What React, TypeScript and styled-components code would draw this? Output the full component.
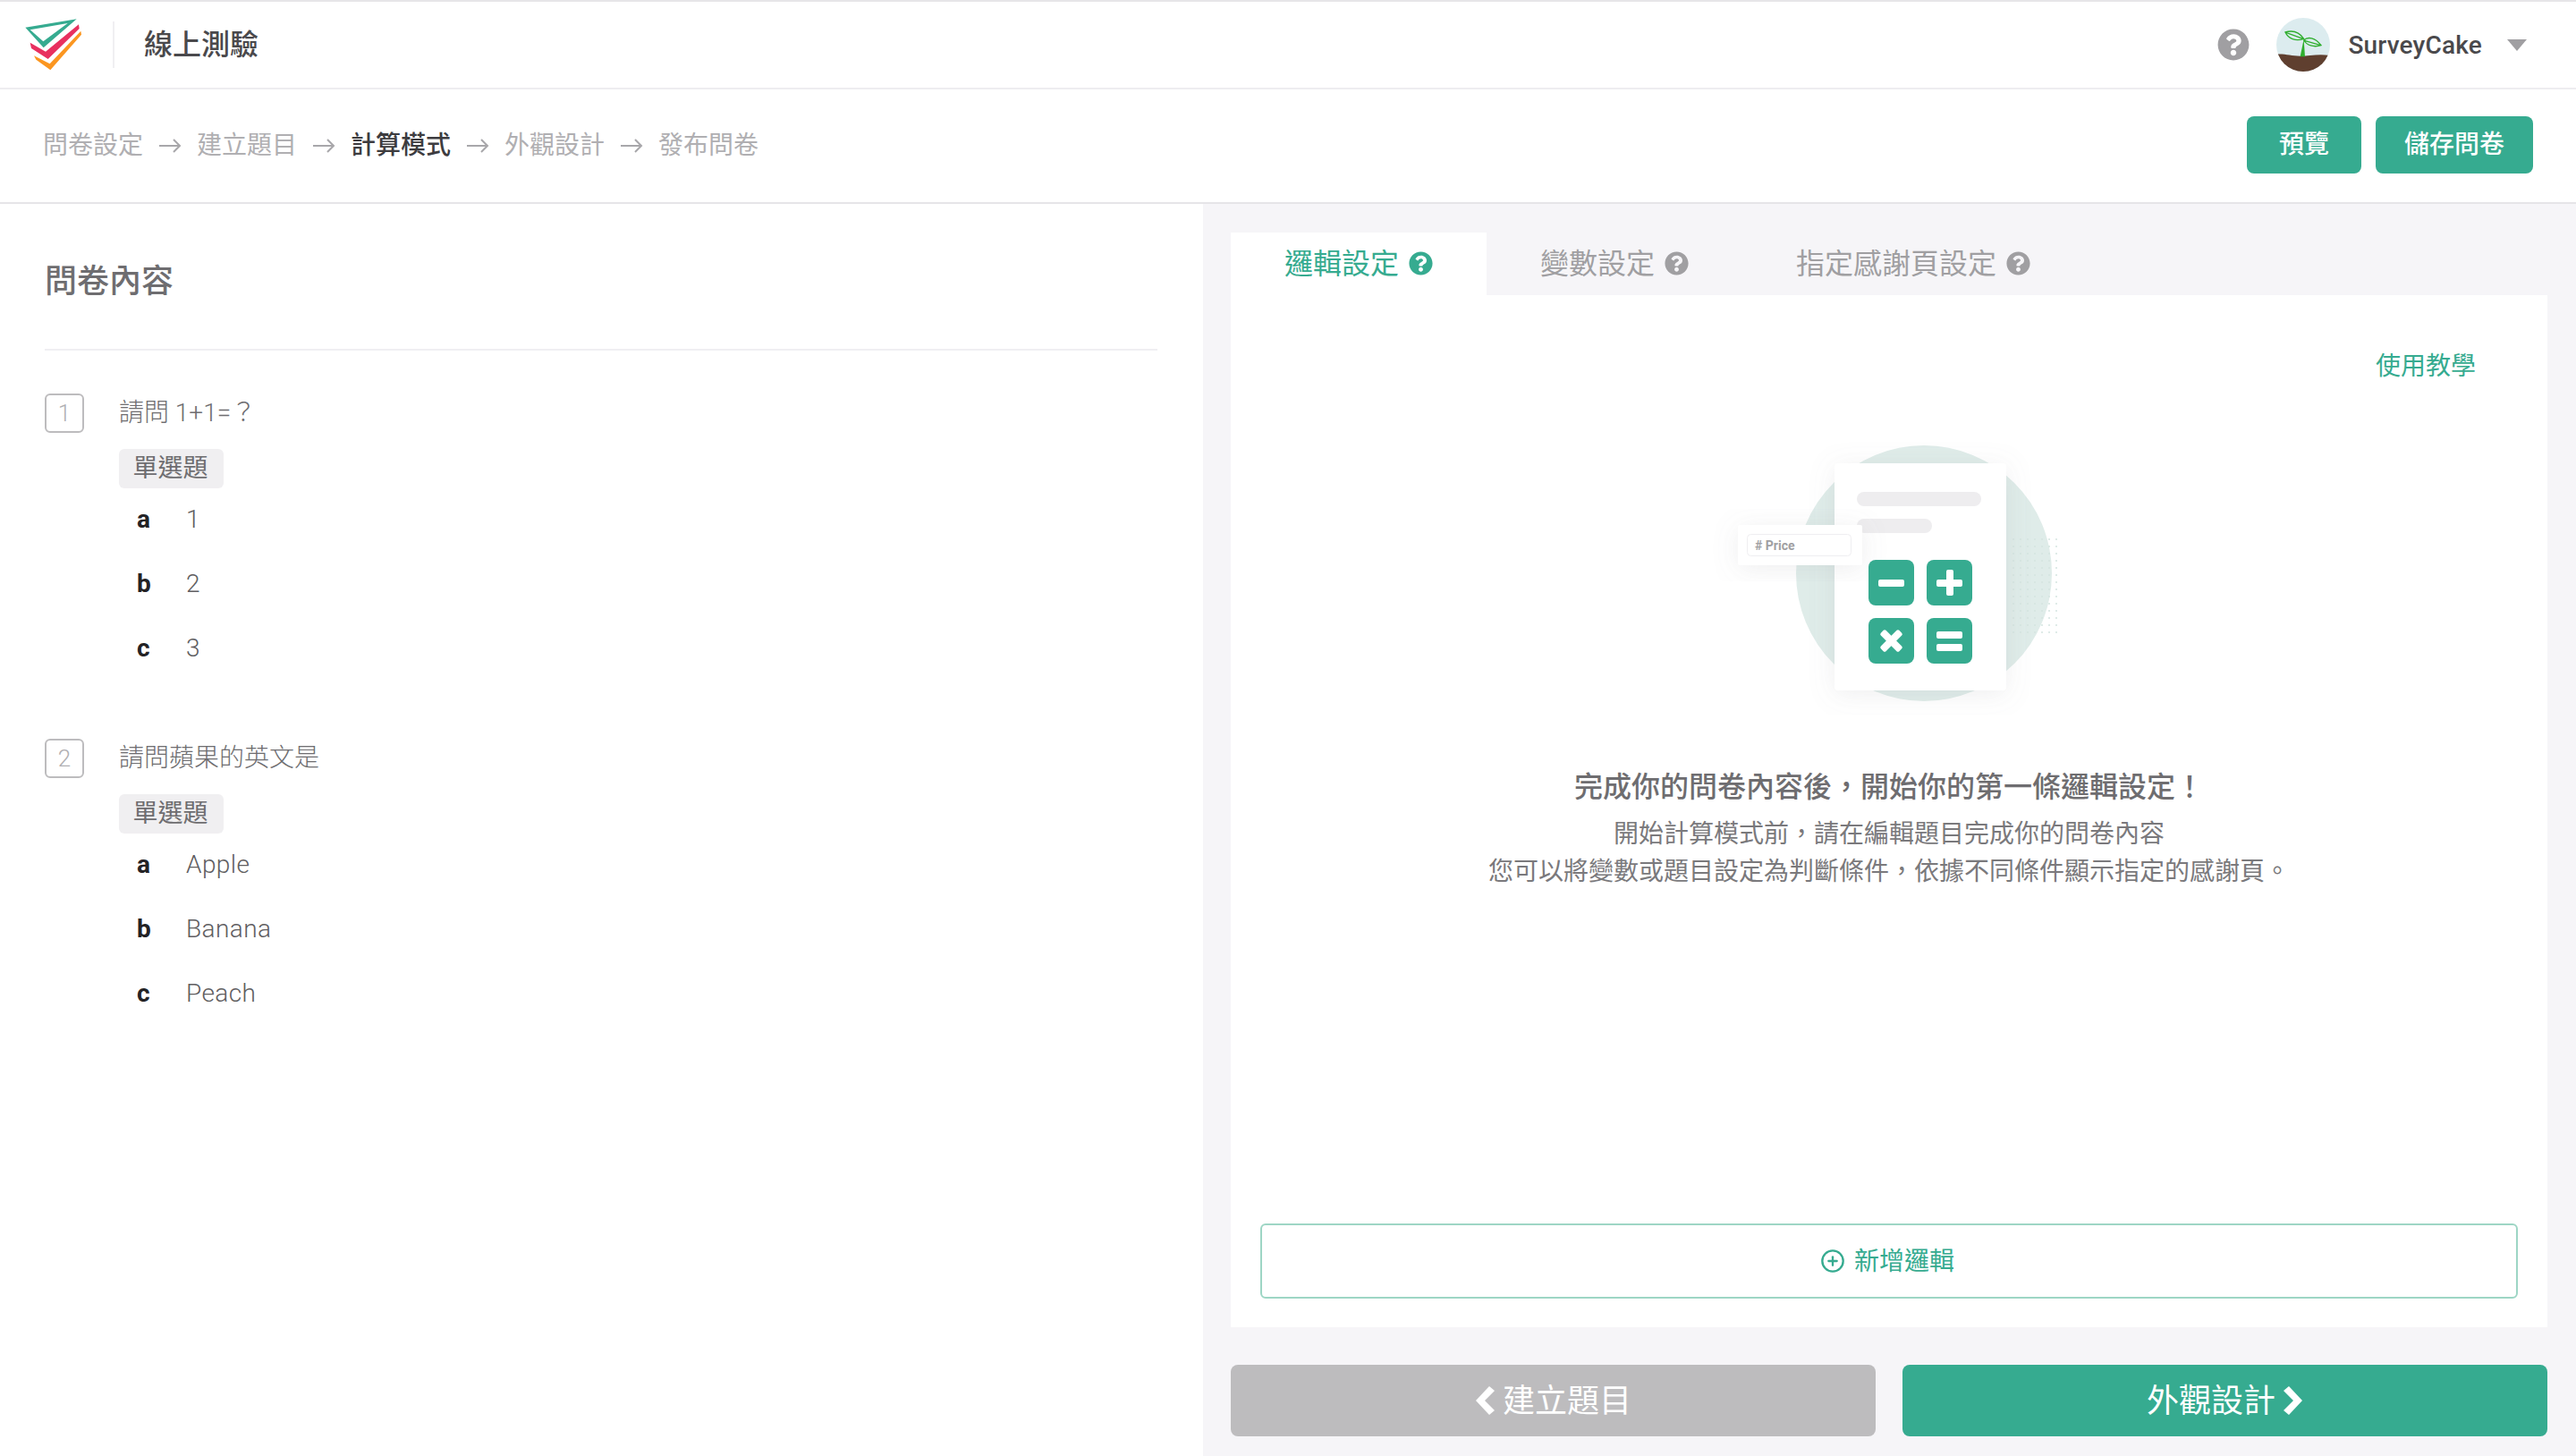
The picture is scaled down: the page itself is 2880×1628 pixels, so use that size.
import React from 'react';
import styled, { createGlobalStyle } from 'styled-components';
import { FaQuestionCircle } from 'react-icons/fa';
import { FiPlusCircle } from 'react-icons/fi';

const GlobalStyle = createGlobalStyle`
	html, body {
		margin: 0;
		padding: 0;
		background: #ffffff;
	}
	* {
		box-sizing: border-box;
	}
	body {
		font-family: Roboto, "Noto Sans CJK TC", sans-serif;
		color: #6e6d70;
	}
`;

const Page = styled.div`
	display: flex;
	flex-direction: column;
	width: 2880px;
	height: 1628px;
	overflow: hidden;
	border-top: 2px solid #e6e5e8;
`;

const Header = styled.header`
	display: flex;
	align-items: center;
	flex: none;
	height: 98px;
	padding: 0 55px 0 27px;
	border-bottom: 2px solid #eeedf0;
`;

const LogoWrap = styled.div`
	display: flex;
	align-items: center;
	height: 52px;
	width: 101px;
	border-right: 2px solid #f0eff2;
`;

const AppTitle = styled.h1`
	flex: 1;
	margin: 0 0 0 33px;
	font-size: 32px;
	font-weight: 500;
	line-height: 44px;
	color: #4a494c;
`;

const HelpButton = styled.span`
	display: flex;
	font-size: 36px;
	color: #a09fa2;
`;

const Avatar = styled.svg`
	width: 60px;
	height: 60px;
	margin-left: 30px;
`;

const UserName = styled.span`
	margin-left: 20px;
	font-size: 28px;
	font-weight: 500;
	letter-spacing: 0.2px;
	color: #4a494c;
`;

const Caret = styled.span`
	width: 0;
	height: 0;
	margin-left: 28px;
	border-left: 11px solid transparent;
	border-right: 11px solid transparent;
	border-top: 13px solid #a09fa2;
`;

const StepBar = styled.div`
	display: flex;
	align-items: center;
	justify-content: space-between;
	flex: none;
	height: 128px;
	padding: 0 48px 2px 48px;
	border-bottom: 2px solid #e6e5e8;
`;

const Steps = styled.nav`
	display: flex;
	align-items: center;
	gap: 17px;
	margin-top: 2px;
`;

const Step = styled.span<{ $active?: boolean }>`
	font-size: 28px;
	line-height: 40px;
	font-weight: ${(p) => (p.$active ? 500 : 400)};
	color: ${(p) => (p.$active ? '#3d3c3f' : '#b0afb2')};
`;

const StepArrow = styled.svg`
	width: 26px;
	height: 18px;
	fill: none;
	stroke: #a8a7aa;
	stroke-width: 2;
`;

const Actions = styled.div`
	display: flex;
	gap: 16px;
`;

const ActionButton = styled.button<{ $width: number }>`
	width: ${(p) => p.$width}px;
	height: 64px;
	padding: 0 0 6px;
	border: 0;
	border-radius: 8px;
	background: #36ab90;
	color: #ffffff;
	font-family: inherit;
	font-size: 28px;
	font-weight: 500;
`;

const Body = styled.div`
	display: flex;
	flex: 1;
	min-height: 0;
`;

const LeftPanel = styled.section`
	flex: none;
	width: 1345px;
	padding: 62px 51px 0 50px;
`;

const PanelTitle = styled.h2`
	margin: 0;
	padding-bottom: 50px;
	font-size: 36px;
	font-weight: 500;
	line-height: 50px;
	color: #6e6d70;
	border-bottom: 2px solid #f0eff2;
`;

const QuestionList = styled.div`
	display: flex;
	flex-direction: column;
	gap: 66px;
	margin-top: 48px;
`;

const QuestionRow = styled.div`
	display: flex;
	align-items: center;
	gap: 39px;
`;

const QuestionNo = styled.span`
	display: flex;
	align-items: center;
	justify-content: center;
	width: 44px;
	height: 44px;
	border: 2px solid #bdbcbe;
	border-radius: 6px;
	font-size: 26px;
	font-weight: 300;
	color: #b0afb2;
`;

const QuestionText = styled.span`
	font-size: 28px;
	font-weight: 300;
	line-height: 44px;
	color: #6e6d70;
`;

const TypeTag = styled.span`
	display: block;
	width: 117px;
	height: 44px;
	margin: 18px 0 -2px 83px;
	padding-right: 2px;
	border-radius: 6px;
	background: #f0eff1;
	font-size: 28px;
	line-height: 44px;
	text-align: center;
	color: #6e6d70;
`;

const Option = styled.div`
	display: flex;
	height: 72px;
	align-items: center;
	padding-left: 103px;
	font-size: 28px;
`;

const OptionKey = styled.b`
	width: 55px;
	font-weight: 700;
	color: #232225;
`;

const OptionValue = styled.span`
	font-weight: 300;
	letter-spacing: 0.4px;
	color: #5f5e61;
`;

const RightPanel = styled.section`
	display: flex;
	flex: 1;
	flex-direction: column;
	min-width: 0;
	padding: 32px 32px 22px 31px;
	background: #f6f5f8;
`;

const Tabs = styled.div`
	display: flex;
	flex: none;
`;

const Tab = styled.div<{ $active?: boolean }>`
	display: flex;
	align-items: center;
	gap: 11px;
	height: 70px;
	padding: 0 60px 6px;
	background: ${(p) => (p.$active ? '#ffffff' : 'transparent')};
	color: ${(p) => (p.$active ? '#36ab90' : '#a09fa2')};
	font-size: 32px;

	svg {
		font-size: 27px;
		margin-top: 4px;
	}
`;

const Card = styled.div`
	display: flex;
	flex: 1;
	flex-direction: column;
	min-height: 0;
	padding: 60px 33px 32px 33px;
	background: #ffffff;
`;

const TutorialLink = styled.a`
	align-self: flex-end;
	margin-right: 47px;
	font-size: 28px;
	line-height: 40px;
	color: #36ab90;
`;

const Illustration = styled.svg`
	display: block;
	align-self: center;
	width: 460px;
	height: 330px;
	margin-top: 40px;
`;

const EmptyTitle = styled.h3`
	margin: 58px 0 0;
	font-size: 32px;
	font-weight: 500;
	line-height: 44px;
	text-align: center;
	color: #6e6d70;
`;

const EmptyText = styled.p`
	margin: 10px 0 0;
	font-size: 28px;
	line-height: 42px;
	text-align: center;
	color: #7a797c;
`;

const AddButton = styled.button`
	display: flex;
	align-items: center;
	justify-content: center;
	gap: 10px;
	flex: none;
	height: 84px;
	margin-top: auto;
	padding: 0 4px 5px 0;
	border: 2px solid #9ed6c5;
	border-radius: 6px;
	background: #ffffff;
	color: #36ab90;
	font-family: inherit;
	font-size: 28px;

	svg {
		font-size: 28px;
		margin-top: 5px;
	}
`;

const PagerRow = styled.div`
	display: grid;
	flex: none;
	grid-template-columns: 1fr 1fr;
	gap: 30px;
	margin-top: 42px;
`;

const PagerButton = styled.button<{ $primary?: boolean }>`
	display: flex;
	align-items: center;
	justify-content: center;
	gap: 9px;
	height: 80px;
	padding: 0 0 6px;
	border: 0;
	border-radius: 8px;
	background: ${(p) => (p.$primary ? '#36ab90' : '#bdbcbe')};
	color: #ffffff;
	font-family: inherit;
	font-size: 36px;
`;

const Chevron = styled.svg`
	width: 22px;
	height: 34px;
	margin-top: 6px;
	fill: #ffffff;
`;

const Logo = () => (
	<svg width="64" height="60" viewBox="20 20 192 180">
		<path
			d="M24 52 L196 24 L85 120 Z M40 60 L166 38 L84 99 Z"
			fill="#36ab90"
			fillRule="evenodd"
		/>
		<path d="M40 103 L92 133 L203 42 L205 56 L100 158 L44 122 Z" fill="#e8305f" />
		<path d="M53 147 L106 174 L210 64 L212 76 L108 195 L60 160 Z" fill="#fb9620" />
	</svg>
);

const Plant = () => (
	<Avatar viewBox="30 30 180 180">
		<defs>
			<clipPath id="avatar-clip">
				<circle cx="120" cy="120" r="90" />
			</clipPath>
		</defs>
		<g clipPath="url(#avatar-clip)">
			<rect x="30" y="30" width="180" height="180" fill="#dcecef" />
			<path d="M30 152 C60 150 80 158 110 158 C140 158 170 150 210 156 L210 210 L30 210 Z" fill="#5f3f2f" />
		</g>
		<path d="M110 160 C114 140 118 120 122 102 L126 160 Z" fill="#2fae2e" />
		<path d="M122 100 C105 75 80 72 60 78 C70 100 95 110 122 100 Z M62 79 L120 100" fill="none" stroke="#2fae2e" strokeWidth="4" />
		<path d="M122 105 C135 92 160 95 180 122 C155 130 132 122 122 105 Z M124 106 L176 121" fill="none" stroke="#2fae2e" strokeWidth="4" />
	</Avatar>
);

const Calculator = () => (
	<Illustration viewBox="1882 470 460 330">
		<defs>
			<pattern id="dots" width="8" height="8" patternUnits="userSpaceOnUse">
				<circle cx="3" cy="3" r="1" fill="#d5e4e1" />
			</pattern>
			<filter id="soft" x="-40%" y="-40%" width="180%" height="180%">
				<feDropShadow dx="0" dy="4" stdDeviation="14" floodColor="#8a8990" floodOpacity="0.14" />
			</filter>
		</defs>
		<circle cx="2151" cy="641" r="143" fill="#dfece9" />
		<rect x="2245" y="598" width="58" height="112" fill="url(#dots)" />
		<rect x="2051" y="518" width="192" height="254" rx="4" fill="#ffffff" filter="url(#soft)" />
		<rect x="2076" y="550" width="139" height="16" rx="8" fill="#eeedef" />
		<rect x="2076" y="580" width="84" height="16" rx="8" fill="#eeedef" />
		<rect x="1943" y="587" width="139" height="45" rx="2" fill="#ffffff" filter="url(#soft)" />
		<rect x="1953.5" y="597.5" width="116" height="24" rx="4" fill="#ffffff" stroke="#efeef1" />
		<text x="1962" y="614.5" fontFamily="Roboto, sans-serif" fontSize="14" fontWeight="700" fill="#a09fa2">
			# Price
		</text>
		<rect x="2089" y="626" width="51" height="51" rx="8" fill="#36ab90" />
		<rect x="2154" y="626" width="51" height="51" rx="8" fill="#36ab90" />
		<rect x="2089" y="691" width="51" height="51" rx="8" fill="#36ab90" />
		<rect x="2154" y="691" width="51" height="51" rx="8" fill="#36ab90" />
		<rect x="2100" y="648" width="29" height="8" rx="2" fill="#ffffff" />
		<rect x="2165" y="648" width="29" height="8" rx="2" fill="#ffffff" />
		<rect x="2176" y="637" width="8" height="29" rx="2" fill="#ffffff" />
		<g transform="rotate(45 2114.5 716.5)">
			<rect x="2100" y="712.5" width="29" height="8" rx="2" fill="#ffffff" />
			<rect x="2110.5" y="702" width="8" height="29" rx="2" fill="#ffffff" />
		</g>
		<rect x="2165" y="706" width="29" height="8" rx="2" fill="#ffffff" />
		<rect x="2165" y="720" width="29" height="8" rx="2" fill="#ffffff" />
	</Illustration>
);

const steps = ['問卷設定', '建立題目', '計算模式', '外觀設計', '發布問卷'];

const questions = [
	{
		no: 1,
		title: '請問 1+1=\uFF1F',
		options: [
			['a', '1'],
			['b', '2'],
			['c', '3'],
		],
	},
	{
		no: 2,
		title: '請問蘋果的英文是',
		options: [
			['a', 'Apple'],
			['b', 'Banana'],
			['c', 'Peach'],
		],
	},
];

const tabs = ['邏輯設定', '變數設定', '指定感謝頁設定'];

export default function App(): JSX.Element {
	return (
		<Page>
			<GlobalStyle />
			<Header>
				<LogoWrap>
					<Logo />
				</LogoWrap>
				<AppTitle>線上測驗</AppTitle>
				<HelpButton>
					<FaQuestionCircle />
				</HelpButton>
				<Plant />
				<UserName>SurveyCake</UserName>
				<Caret />
			</Header>
			<StepBar>
				<Steps>
					{steps.map((s, i) => (
						<React.Fragment key={s}>
							{i > 0 && (
								<StepArrow viewBox="0 0 26 18">
									<path d="M1 9 H24 M17 2 L24 9 L17 16" />
								</StepArrow>
							)}
							<Step $active={i === 2}>{s}</Step>
						</React.Fragment>
					))}
				</Steps>
				<Actions>
					<ActionButton $width={128}>預覽</ActionButton>
					<ActionButton $width={176}>儲存問卷</ActionButton>
				</Actions>
			</StepBar>
			<Body>
				<LeftPanel>
					<PanelTitle>問卷內容</PanelTitle>
					<QuestionList>
						{questions.map((q) => (
							<div key={q.no}>
								<QuestionRow>
									<QuestionNo>{q.no}</QuestionNo>
									<QuestionText>{q.title}</QuestionText>
								</QuestionRow>
								<TypeTag>單選題</TypeTag>
								{q.options.map(([k, v]) => (
									<Option key={k}>
										<OptionKey>{k}</OptionKey>
										<OptionValue>{v}</OptionValue>
									</Option>
								))}
							</div>
						))}
					</QuestionList>
				</LeftPanel>
				<RightPanel>
					<Tabs>
						{tabs.map((t, i) => (
							<Tab key={t} $active={i === 0}>
								{t}
								<FaQuestionCircle />
							</Tab>
						))}
					</Tabs>
					<Card>
						<TutorialLink>使用教學</TutorialLink>
						<Calculator />
						<EmptyTitle>{'完成你的問卷內容後\uFF0C開始你的第一條邏輯設定\uFF01'}</EmptyTitle>
						<EmptyText>
							{'開始計算模式前\uFF0C請在編輯題目完成你的問卷內容'}
							<br />
							{'您可以將變數或題目設定為判斷條件\uFF0C依據不同條件顯示指定的感謝頁。'}
						</EmptyText>
						<AddButton>
							<FiPlusCircle />
							新增邏輯
						</AddButton>
					</Card>
					<PagerRow>
						<PagerButton>
							<Chevron viewBox="0 0 22 34">
								<path d="M16 1 L22 6 L11 17 L22 28 L16 33 L1 17 Z" />
							</Chevron>
							建立題目
						</PagerButton>
						<PagerButton $primary>
							外觀設計
							<Chevron viewBox="0 0 22 34">
								<path d="M6 1 L0 6 L11 17 L0 28 L6 33 L21 17 Z" />
							</Chevron>
						</PagerButton>
					</PagerRow>
				</RightPanel>
			</Body>
		</Page>
	);
}
